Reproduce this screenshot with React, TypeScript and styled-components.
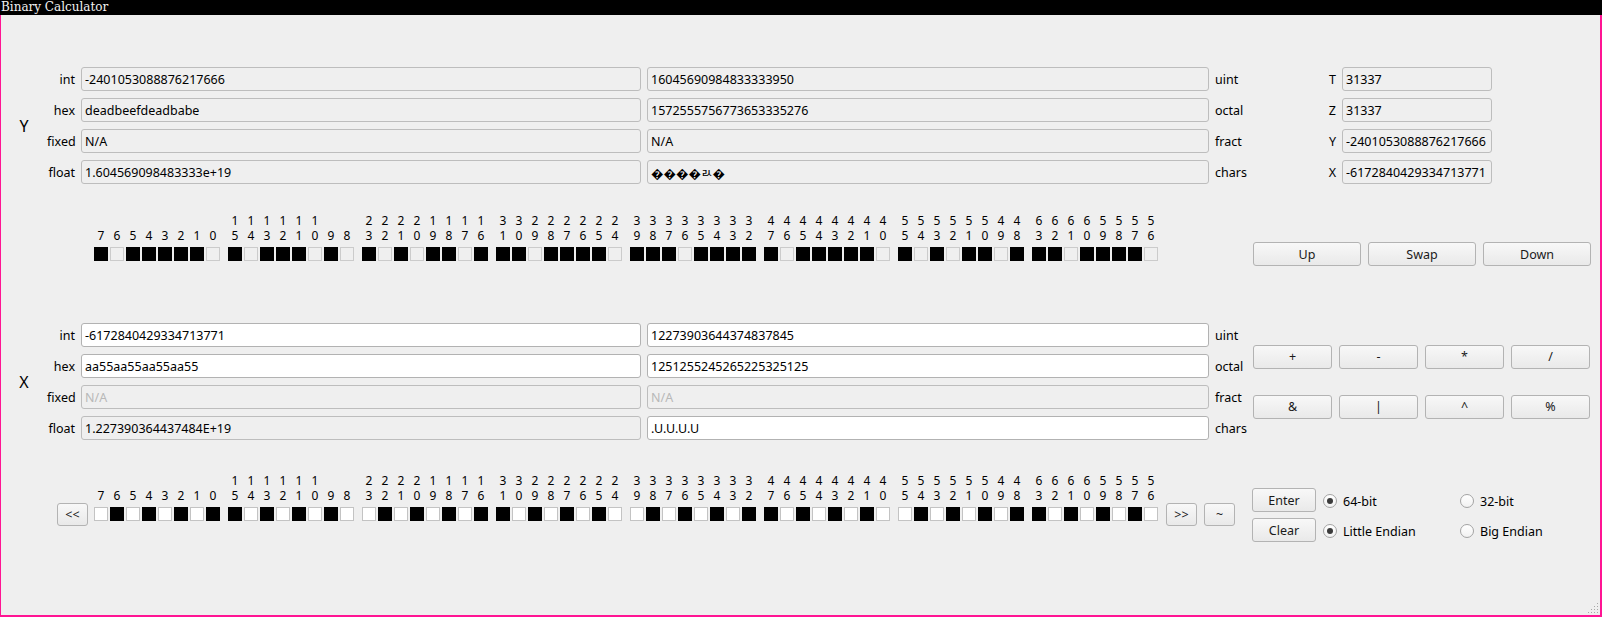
import React from 'react';
import styled, { createGlobalStyle } from 'styled-components';

const Global = createGlobalStyle`
  html, body { margin: 0; padding: 0; background: #efefef; }
  body { font-family: "Noto Sans", "DejaVu Sans", sans-serif; font-size: 12.5px; color: #000; }
  #root { width: 1602px; height: 617px; }
  * { box-sizing: border-box; }
`;

const Window = styled.div`
  width: 1602px;
  height: 617px;
  display: flex;
  flex-direction: column;
  overflow: hidden;
`;

const TitleBar = styled.div`
  height: 15px;
  flex: none;
  background: #000;
  color: #f2f2f2;
  font-family: "DejaVu Serif", serif;
  font-size: 12px;
  line-height: 14px;
  padding-left: 1px;
  white-space: nowrap;
`;

const Frame = styled.div`
  flex: 1;
  position: relative;
  background: #efefef;
  border-left: 1px solid #ff1493;
  border-right: 2px solid #ff1493;
  border-bottom: 2px solid #ff1493;
  display: flex;
  flex-direction: column;
`;

const FieldSection = styled.div<{ $top: number }>`
  display: flex;
  align-items: center;
  margin-top: ${p => p.$top}px;
`;

const RegLetter = styled.div`
  width: 46px;
  text-align: center;
  font-size: 16px;
`;

const FieldGrid = styled.div<{ $cols: string }>`
  display: grid;
  grid-template-columns: ${p => p.$cols};
  grid-auto-rows: 24px;
  column-gap: 6px;
  row-gap: 7px;
  align-items: center;
`;

const Label = styled.div<{ $align: 'left' | 'right' }>`
  text-align: ${p => p.$align};
  white-space: nowrap;
`;

const Field = styled.input<{ $white?: boolean; $muted?: boolean }>`
  width: 100%;
  height: 24px;
  margin: 0;
  padding: 0 3px;
  border: 1px solid ${p => (p.$white ? '#b2b2b2' : '#bdbdbd')};
  border-radius: 3px;
  background: ${p => (p.$white ? '#ffffff' : '#efefef')};
  color: ${p => (p.$muted ? '#b4b4b4' : '#000')};
  font-family: "Noto Sans", "DejaVu Sans", "Noto Sans CJK KR", sans-serif;
  font-size: 12.5px;
  outline: none;
  &::placeholder { color: #b8b8b8; opacity: 1; }
`;

const OpGrid = styled.div`
  grid-column: 5;
  grid-row: 1 / span 4;
  align-self: center;
  display: grid;
  grid-template-columns: repeat(4, 79px);
  grid-auto-rows: 24px;
  column-gap: 7px;
  row-gap: 26px;
`;

const Button = styled.button<{ $w?: number; $h?: number }>`
  width: ${p => (p.$w ? `${p.$w}px` : '100%')};
  height: ${p => p.$h ?? 24}px;
  margin: 0;
  padding: 0;
  border: 1px solid #b3b3b3;
  border-radius: 3px;
  background: linear-gradient(#f8f8f8, #e9e9e9);
  color: #1a1a1a;
  font-family: "Noto Sans", "DejaVu Sans", sans-serif;
  font-size: 12.5px;
  flex: none;
`;

const BitRow = styled.div<{ $top: number; $left: number }>`
  display: flex;
  align-items: flex-start;
  margin-top: ${p => p.$top}px;
  padding-left: ${p => p.$left}px;
`;

const Bank = styled.div`
  display: flex;
  gap: 8px;
`;

const ByteGroup = styled.div`
  display: flex;
  gap: 2px;
`;

const BitCell = styled.div`
  width: 14px;
  display: flex;
  flex-direction: column;
  align-items: center;
`;

const BitDigit = styled.span`
  height: 15px;
  line-height: 15px;
  font-size: 12px;
`;

const BitSquare = styled.div<{ $on: boolean; $live: boolean }>`
  margin-top: 4px;
  width: 14px;
  height: 14px;
  border: 1px solid ${p => (p.$on ? '#000' : p.$live ? '#c3c3c3' : '#cbcbcb')};
  background: ${p => (p.$on ? '#000' : p.$live ? '#fff' : '#efefef')};
`;

const SideButtons = styled.div<{ $top: number; $gap: number; $left: number }>`
  display: flex;
  gap: ${p => p.$gap}px;
  margin-top: ${p => p.$top}px;
  margin-left: ${p => p.$left}px;
`;

const StackButtons = styled.div`
  display: flex;
  flex-direction: column;
  gap: 6px;
  margin-top: 15px;
  margin-left: 17px;
`;

const RadioGrid = styled.div`
  display: grid;
  grid-template-columns: 137px 130px;
  grid-auto-rows: 30px;
  margin-top: 13px;
  margin-left: 7px;
  align-items: center;
`;

const RadioItem = styled.div`
  display: flex;
  align-items: center;
  gap: 6px;
`;

const RadioCircle = styled.span`
  width: 14px;
  height: 14px;
  border-radius: 50%;
  border: 1px solid #a3a3a3;
  background: linear-gradient(#ffffff, #f1f1f1);
  display: flex;
  align-items: center;
  justify-content: center;
`;

const RadioDot = styled.span`
  width: 6px;
  height: 6px;
  border-radius: 50%;
  background: #3b3b3b;
`;

const Grip = styled.svg`
  position: absolute;
  right: 1px;
  bottom: 1px;
`;

const toBits = (hex: string): boolean[] => {
  const v = BigInt('0x' + hex);
  const out: boolean[] = [];
  for (let i = 0; i < 64; i++) out.push(((v >> BigInt(i)) & 1n) === 1n);
  return out;
};

const BitBank: React.FC<{ hex: string; live: boolean }> = ({ hex, live }) => {
  const bits = toBits(hex);
  return (
    <Bank>
      {Array.from({ length: 8 }, (_, b) => (
        <ByteGroup key={b}>
          {Array.from({ length: 8 }, (_, k) => {
            const i = b * 8 + 7 - k;
            return (
              <BitCell key={i}>
                <BitDigit>{i >= 10 ? Math.floor(i / 10) : ''}</BitDigit>
                <BitDigit>{i % 10}</BitDigit>
                <BitSquare $on={bits[i]} $live={live} />
              </BitCell>
            );
          })}
        </ByteGroup>
      ))}
    </Bank>
  );
};

const Radio: React.FC<{ label: string; checked: boolean }> = ({ label, checked }) => (
  <RadioItem>
    <RadioCircle>{checked && <RadioDot />}</RadioCircle>
    <span>{label}</span>
  </RadioItem>
);

const yRows = [
  ['int', '-2401053088876217666', '16045690984833333950', 'uint', 'T', '31337'],
  ['hex', 'deadbeefdeadbabe', '1572555756773653335276', 'octal', 'Z', '31337'],
  ['fixed', 'N/A', 'N/A', 'fract', 'Y', '-2401053088876217666'],
  ['float', '1.604569098483333e+19', '\uFFFD\uFFFD\uFFFD\uFFFD\uFFAD\uFFFD', 'chars', 'X', '-6172840429334713771'],
];

const xRows: { l: string; a: string; b: string; r: string; white: boolean; muted: boolean; bWhite: boolean }[] = [
  { l: 'int', a: '-6172840429334713771', b: '12273903644374837845', r: 'uint', white: true, muted: false, bWhite: true },
  { l: 'hex', a: 'aa55aa55aa55aa55', b: '1251255245265225325125', r: 'octal', white: true, muted: false, bWhite: true },
  { l: 'fixed', a: 'N/A', b: 'N/A', r: 'fract', white: false, muted: true, bWhite: false },
  { l: 'float', a: '1.227390364437484E+19', b: '.U.U.U.U', r: 'chars', white: false, muted: false, bWhite: true },
];

const ops = ['+', '-', '*', '/', '&', '|', '^', '%'];

export default function App() {
  const gripDots: [number, number][] = [];
  for (let r = 0; r < 4; r++) for (let c = 3 - r; c < 4; c++) gripDots.push([c * 3, r * 3]);
  return (
    <Window>
      <Global />
      <TitleBar>Binary Calculator</TitleBar>
      <Frame>
        <FieldSection $top={52}>
          <RegLetter>Y</RegLetter>
          <FieldGrid $cols="28px 560px 562px 100px 15px 150px">
            {yRows.map(r => (
              <React.Fragment key={r[0]}>
                <Label $align="right">{r[0]}</Label>
                <Field readOnly value={r[1]} />
                <Field readOnly value={r[2]} />
                <Label $align="left">{r[3]}</Label>
                <Label $align="right">{r[4]}</Label>
                <Field readOnly value={r[5]} />
              </React.Fragment>
            ))}
          </FieldGrid>
        </FieldSection>

        <BitRow $top={29} $left={93}>
          <BitBank hex="deadbeefdeadbabe" live={false} />
          <SideButtons $top={29} $gap={7} $left={95}>
            <Button $w={108}>Up</Button>
            <Button $w={108}>Swap</Button>
            <Button $w={108}>Down</Button>
          </SideButtons>
        </BitRow>

        <FieldSection $top={57}>
          <RegLetter>X</RegLetter>
          <FieldGrid $cols="28px 560px 562px 32px 337px">
            {xRows.map((r, i) => (
              <React.Fragment key={r.l}>
                <Label $align="right" style={{ gridRow: i + 1, gridColumn: 1 }}>{r.l}</Label>
                {r.muted ? (
                  <Field readOnly disabled placeholder={r.a} style={{ gridRow: i + 1, gridColumn: 2 }} $muted />
                ) : (
                  <Field readOnly value={r.a} $white={r.white} style={{ gridRow: i + 1, gridColumn: 2 }} />
                )}
                {r.muted ? (
                  <Field readOnly disabled placeholder={r.b} style={{ gridRow: i + 1, gridColumn: 3 }} $muted />
                ) : (
                  <Field readOnly value={r.b} $white={r.bWhite} style={{ gridRow: i + 1, gridColumn: 3 }} />
                )}
                <Label $align="left" style={{ gridRow: i + 1, gridColumn: 4 }}>{r.r}</Label>
              </React.Fragment>
            ))}
            <OpGrid>
              {ops.map(o => (
                <Button key={o}>{o}</Button>
              ))}
            </OpGrid>
          </FieldGrid>
        </FieldSection>

        <BitRow $top={33} $left={56}>
          <SideButtons $top={30} $gap={0} $left={0}>
            <Button $w={31} $h={23}>&lt;&lt;</Button>
          </SideButtons>
          <SideButtons $top={0} $gap={0} $left={6}>
            <BitBank hex="aa55aa55aa55aa55" live />
          </SideButtons>
          <SideButtons $top={30} $gap={7} $left={8}>
            <Button $w={31} $h={23}>&gt;&gt;</Button>
            <Button $w={31} $h={23}>~</Button>
          </SideButtons>
          <StackButtons>
            <Button $w={64}>Enter</Button>
            <Button $w={64}>Clear</Button>
          </StackButtons>
          <RadioGrid>
            <Radio label="64-bit" checked />
            <Radio label="32-bit" checked={false} />
            <Radio label="Little Endian" checked />
            <Radio label="Big Endian" checked={false} />
          </RadioGrid>
        </BitRow>

        <Grip width="12" height="12" viewBox="0 0 12 12">
          {gripDots.map(([x, y], i) => (
            <rect key={i} x={x + 1} y={y + 1} width="1" height="1" fill="#a8a8a8" />
          ))}
        </Grip>
      </Frame>
    </Window>
  );
}
